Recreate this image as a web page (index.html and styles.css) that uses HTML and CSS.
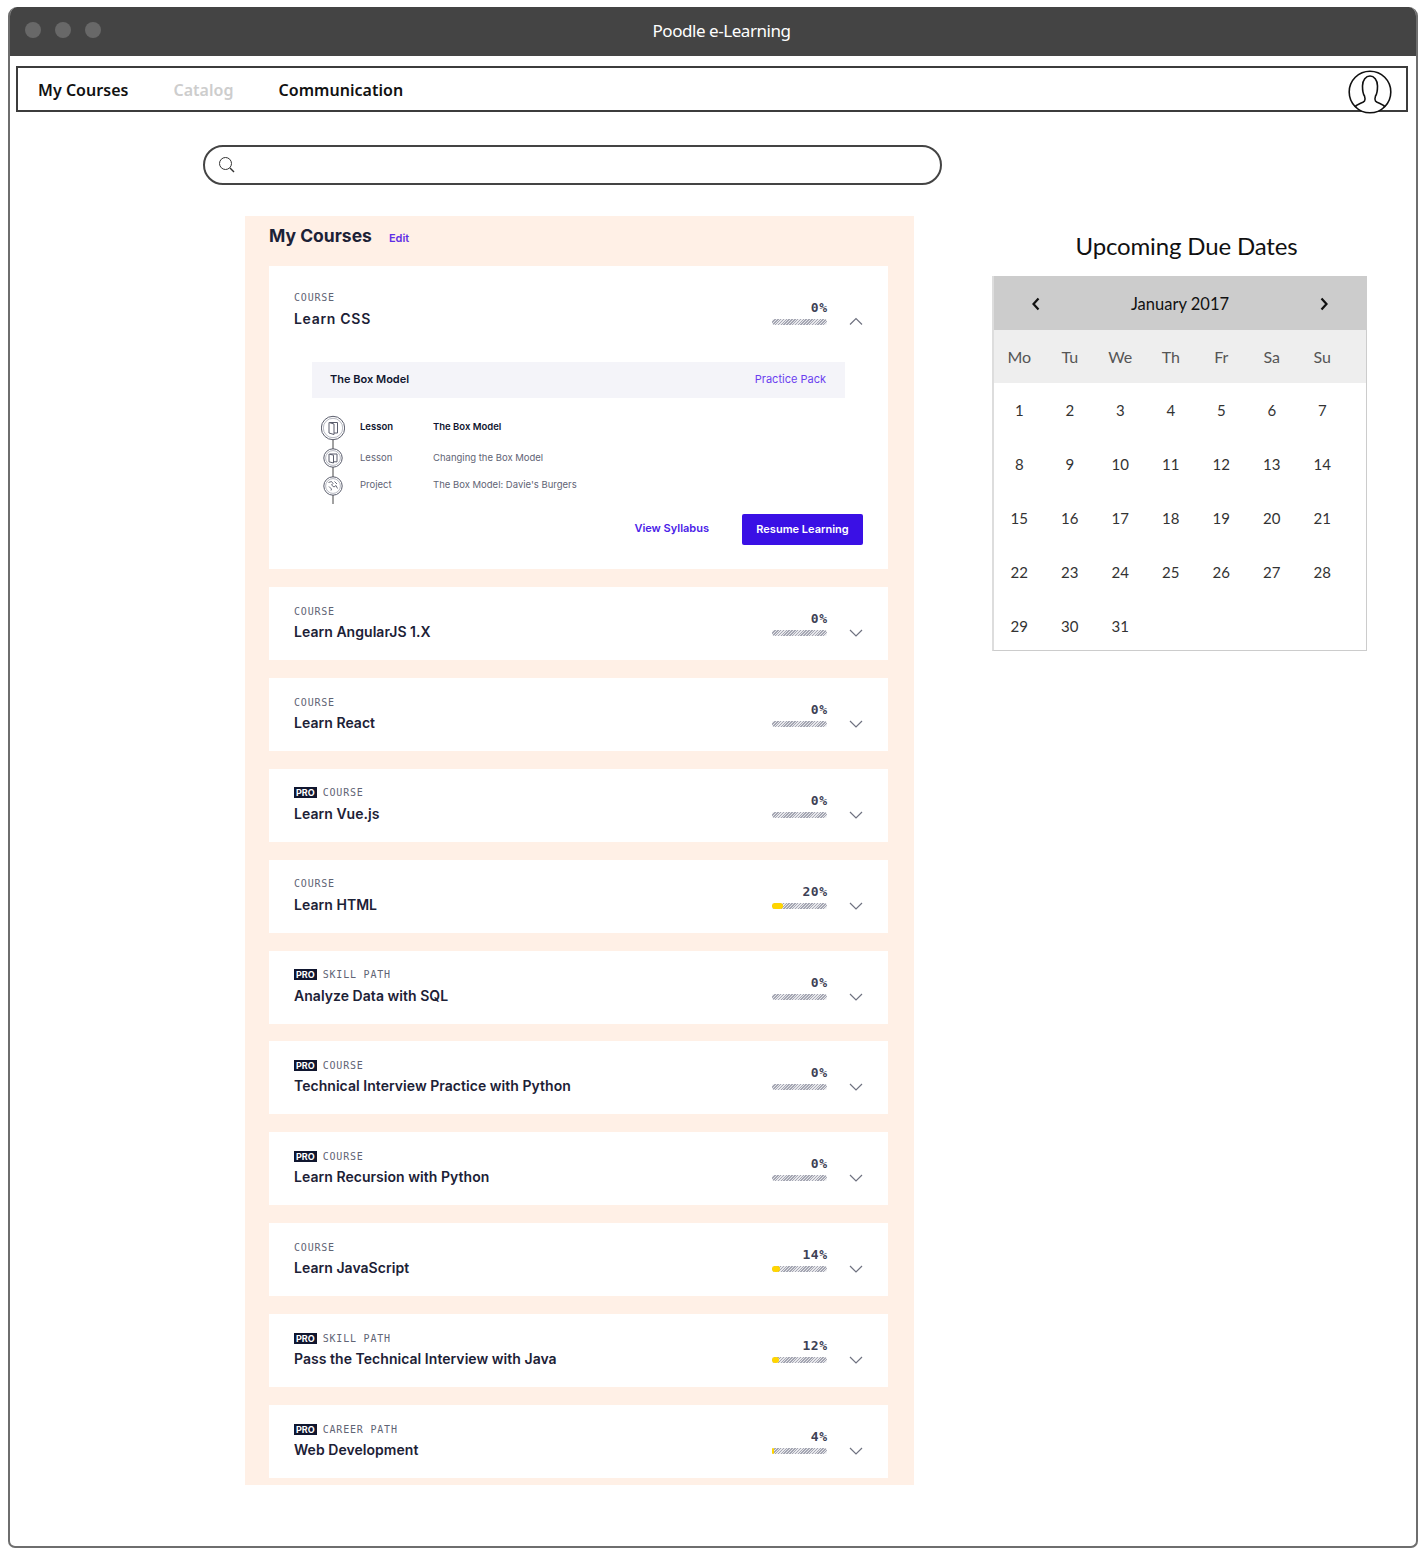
FILE: index.html
```html
<!DOCTYPE html>
<html>
<head>
  <title>Poodle e-Learning</title>
  <link rel="stylesheet" href="styles.css">
</head>
<body>
  <div class="window">
    <div class="titlebar">
      <div class="dots"><span></span><span></span><span></span></div>
      <div class="window-title">Poodle e-Learning</div>
    </div>

    <nav class="topnav">
      <a class="nav-link">My Courses</a>
      <a class="nav-link nav-disabled">Catalog</a>
      <a class="nav-link">Communication</a>
      <svg class="avatar" width="44" height="44" viewBox="0 0 44 44" fill="none" stroke="#111" stroke-width="1.6">
        <circle cx="22" cy="22" r="20.8" fill="#fff"/>
        <path d="M7 37C9 34 15 33 16.5 31C17.5 29.5 17 27.5 16.5 26C15 24 14.5 20 14.5 16C14.5 10 18 6 22 6C26 6 29.5 10 29.5 16C29.5 20 29 24 27.5 26C27 27.5 26.5 29.5 27.5 31C29 33 35 34 37 37"/>
      </svg>
    </nav>

    <div class="main">
      <div class="left-col">
        <div class="search">
          <svg width="18" height="18" viewBox="0 0 18 18" fill="none" stroke="#333" stroke-width="1">
            <circle cx="7.5" cy="7.5" r="6"/>
            <path d="M12 12L16 16" stroke-width="1.5"/>
          </svg>
        </div>

        <section class="panel">
          <div class="panel-head">
            <h2>My Courses</h2>
            <a class="edit">Edit</a>
          </div>

          <div class="card open">
            <div class="card-head">
              <div class="card-text">
                <div class="card-label"><span>COURSE</span></div>
                <div class="card-name">Learn CSS</div>
              </div>
              <div class="progress">
                <div class="percent">0%</div>
                <div class="bar"></div>
              </div>
              <svg class="chevron" width="14" height="8" viewBox="0 0 14 8"><path d="M1 7.5L7 1.5L13 7.5"/></svg>
            </div>

            <div class="band">
              <strong>The Box Model</strong>
              <a>Practice Pack</a>
            </div>

            <div class="timeline">
              <svg width="24" height="90" viewBox="0 0 24 90" fill="none" stroke="#5a5d6c">
                <path d="M12 26V35M12 53V63M12 81V90" stroke="#444"/>
                <circle cx="12" cy="14" r="11.7"/>
                <circle cx="12" cy="14" r="9.7" stroke="#a5a7b2" stroke-width=".8"/>
                <path d="M8 8.5L13 10V20.5L8 19ZM9 8.5H16.5V19H13"/>
                <circle cx="12" cy="44" r="9.2"/>
                <circle cx="12" cy="44" r="7.4" stroke="#a5a7b2" stroke-width=".8"/>
                <path d="M8 40L12.5 41.2V49L8 47.8ZM9 40H16V47.8H12.5"/>
                <circle cx="12" cy="72" r="9.2"/>
                <circle cx="12" cy="72" r="7.4" stroke="#a5a7b2" stroke-width=".8"/>
                <path d="M7.5 68.5L10.5 67.5L12 69.5L10.5 71L13 73L15 71.5L16.5 74.5M8 72.5L10.5 75L10 76.5M13.5 67.5L16 70" stroke-width=".9"/>
              </svg>
              <div class="steps">
                <div class="step step-current"><span>Lesson</span><span>The Box Model</span></div>
                <div class="step step-mid"><span>Lesson</span><span>Changing the Box Model</span></div>
                <div class="step step-last"><span>Project</span><span>The Box Model: Davie's Burgers</span></div>
              </div>
            </div>

            <div class="actions">
              <a class="syllabus">View Syllabus</a>
              <a class="resume">Resume Learning</a>
            </div>
          </div>

          <div class="card">
            <div class="card-head">
              <div class="card-text">
                <div class="card-label"><span>COURSE</span></div>
                <div class="card-name">Learn AngularJS 1.X</div>
              </div>
              <div class="progress">
                <div class="percent">0%</div>
                <div class="bar"></div>
              </div>
              <svg class="chevron" width="14" height="8" viewBox="0 0 14 8"><path d="M1 1L7 7L13 1"/></svg>
            </div>
          </div>

          <div class="card">
            <div class="card-head">
              <div class="card-text">
                <div class="card-label"><span>COURSE</span></div>
                <div class="card-name">Learn React</div>
              </div>
              <div class="progress">
                <div class="percent">0%</div>
                <div class="bar"></div>
              </div>
              <svg class="chevron" width="14" height="8" viewBox="0 0 14 8"><path d="M1 1L7 7L13 1"/></svg>
            </div>
          </div>

          <div class="card">
            <div class="card-head">
              <div class="card-text">
                <div class="card-label"><b class="pro">PRO</b><span>COURSE</span></div>
                <div class="card-name">Learn Vue.js</div>
              </div>
              <div class="progress">
                <div class="percent">0%</div>
                <div class="bar"></div>
              </div>
              <svg class="chevron" width="14" height="8" viewBox="0 0 14 8"><path d="M1 1L7 7L13 1"/></svg>
            </div>
          </div>

          <div class="card">
            <div class="card-head">
              <div class="card-text">
                <div class="card-label"><span>COURSE</span></div>
                <div class="card-name">Learn HTML</div>
              </div>
              <div class="progress">
                <div class="percent">20%</div>
                <div class="bar"><div class="bar-fill" style="width: 20%"></div></div>
              </div>
              <svg class="chevron" width="14" height="8" viewBox="0 0 14 8"><path d="M1 1L7 7L13 1"/></svg>
            </div>
          </div>

          <div class="card">
            <div class="card-head">
              <div class="card-text">
                <div class="card-label"><b class="pro">PRO</b><span>SKILL PATH</span></div>
                <div class="card-name">Analyze Data with SQL</div>
              </div>
              <div class="progress">
                <div class="percent">0%</div>
                <div class="bar"></div>
              </div>
              <svg class="chevron" width="14" height="8" viewBox="0 0 14 8"><path d="M1 1L7 7L13 1"/></svg>
            </div>
          </div>

          <div class="card">
            <div class="card-head">
              <div class="card-text">
                <div class="card-label"><b class="pro">PRO</b><span>COURSE</span></div>
                <div class="card-name">Technical Interview Practice with Python</div>
              </div>
              <div class="progress">
                <div class="percent">0%</div>
                <div class="bar"></div>
              </div>
              <svg class="chevron" width="14" height="8" viewBox="0 0 14 8"><path d="M1 1L7 7L13 1"/></svg>
            </div>
          </div>

          <div class="card">
            <div class="card-head">
              <div class="card-text">
                <div class="card-label"><b class="pro">PRO</b><span>COURSE</span></div>
                <div class="card-name">Learn Recursion with Python</div>
              </div>
              <div class="progress">
                <div class="percent">0%</div>
                <div class="bar"></div>
              </div>
              <svg class="chevron" width="14" height="8" viewBox="0 0 14 8"><path d="M1 1L7 7L13 1"/></svg>
            </div>
          </div>

          <div class="card">
            <div class="card-head">
              <div class="card-text">
                <div class="card-label"><span>COURSE</span></div>
                <div class="card-name">Learn JavaScript</div>
              </div>
              <div class="progress">
                <div class="percent">14%</div>
                <div class="bar"><div class="bar-fill" style="width: 14%"></div></div>
              </div>
              <svg class="chevron" width="14" height="8" viewBox="0 0 14 8"><path d="M1 1L7 7L13 1"/></svg>
            </div>
          </div>

          <div class="card">
            <div class="card-head">
              <div class="card-text">
                <div class="card-label"><b class="pro">PRO</b><span>SKILL PATH</span></div>
                <div class="card-name">Pass the Technical Interview with Java</div>
              </div>
              <div class="progress">
                <div class="percent">12%</div>
                <div class="bar"><div class="bar-fill" style="width: 12%"></div></div>
              </div>
              <svg class="chevron" width="14" height="8" viewBox="0 0 14 8"><path d="M1 1L7 7L13 1"/></svg>
            </div>
          </div>

          <div class="card">
            <div class="card-head">
              <div class="card-text">
                <div class="card-label"><b class="pro">PRO</b><span>CAREER PATH</span></div>
                <div class="card-name">Web Development</div>
              </div>
              <div class="progress">
                <div class="percent">4%</div>
                <div class="bar"><div class="bar-fill" style="width: 4%"></div></div>
              </div>
              <svg class="chevron" width="14" height="8" viewBox="0 0 14 8"><path d="M1 1L7 7L13 1"/></svg>
            </div>
          </div>
        </section>
      </div>

      <aside class="right-col">
        <h2 class="due-title">Upcoming Due Dates</h2>
        <div class="calendar">
          <div class="cal-head">
            <svg width="10" height="14" viewBox="0 0 10 14"><path d="M7.5 1.5L2.5 7L7.5 12.5"/></svg>
            <span>January 2017</span>
            <svg width="10" height="14" viewBox="0 0 10 14"><path d="M2.5 1.5L7.5 7L2.5 12.5"/></svg>
          </div>
          <div class="cal-week">
            <span>Mo</span><span>Tu</span><span>We</span><span>Th</span><span>Fr</span><span>Sa</span><span>Su</span>
          </div>
          <div class="cal-days">
            <span>1</span><span>2</span><span>3</span><span>4</span><span>5</span><span>6</span><span>7</span>
            <span>8</span><span>9</span><span>10</span><span>11</span><span>12</span><span>13</span><span>14</span>
            <span>15</span><span>16</span><span>17</span><span>18</span><span>19</span><span>20</span><span>21</span>
            <span>22</span><span>23</span><span>24</span><span>25</span><span>26</span><span>27</span><span>28</span>
            <span>29</span><span>30</span><span>31</span>
          </div>
        </div>
      </aside>
    </div>
  </div>
</body>
</html>
```

FILE: styles.css
```css
body {
  margin: 0;
  background: #fff;
  font-family: "Noto Sans", Arial, sans-serif;
  color: #111;
}

.window {
  box-sizing: border-box;
  height: 1541px;
  margin: 7px 9px 0 8px;
  border: 2px solid #6e6e6e;
  border-top: 0;
  border-radius: 9px 9px 7px 7px;
  overflow: hidden;
}

.titlebar {
  position: relative;
  display: flex;
  align-items: center;
  justify-content: center;
  height: 49px;
  margin: 0 -2px;
  background: #444;
}

.dots {
  position: absolute;
  left: 17px;
  top: 15px;
  display: flex;
  gap: 14px;
}

.dots span {
  width: 16px;
  height: 16px;
  border-radius: 50%;
  background: #686868;
}

.window-title {
  padding: 0 0 2px 17px;
  font-size: 17px;
  color: #fff;
  letter-spacing: -.45px;
}

.topnav {
  position: relative;
  display: flex;
  align-items: center;
  gap: 45px;
  height: 46px;
  box-sizing: border-box;
  margin: 10px 8px 0 6px;
  padding: 1px 0 0 20px;
  border: 2px solid #3c3c3c;
}

.nav-link {
  font-size: 16px;
  font-weight: 600;
  color: #111;
  letter-spacing: .03px;
}

.nav-disabled {
  color: #cdcdcd;
}

.avatar {
  position: absolute;
  right: 14px;
  top: 2px;
}

.main {
  display: flex;
  padding: 33px 0 0 193px;
}

.left-col {
  width: 739px;
}

.search {
  display: flex;
  align-items: center;
  box-sizing: border-box;
  height: 40px;
  padding-left: 13px;
  border: 2px solid #444;
  border-radius: 20px;
}

.panel {
  width: 669px;
  box-sizing: border-box;
  margin: 31px 0 0 42px;
  padding: 0 26px 7px 24px;
  background: #fff0e6;
  font-family: Inter, Arial, sans-serif;
  color: #10162f;
}

.panel-head {
  display: flex;
  align-items: center;
  gap: 17px;
  height: 50px;
  padding-bottom: 12px;
  box-sizing: border-box;
}

.panel-head h2 {
  margin: 0;
  font-size: 17.5px;
  font-weight: 700;
  color: #1c2136;
}

.edit {
  font-size: 11px;
  font-weight: 600;
  color: #5f2ee5;
  margin-top: 5px;
}

.card {
  margin-bottom: 17.91px;
  padding: 17px 25px 18px;
  background: #fff;
}

.card:last-child {
  margin-bottom: 0;
}

.card.open {
  margin-bottom: 18px;
  padding-top: 24px;
  padding-bottom: 24px;
}

.card-head {
  display: flex;
  align-items: flex-start;
}

.card-text {
  flex: 1;
}

.card-label {
  display: flex;
  align-items: center;
  gap: 6px;
  height: 14.4px;
  font-family: "DejaVu Sans Mono", monospace;
  font-size: 10px;
  color: #5f6475;
  letter-spacing: .8px;
}

.pro {
  padding: 0 2px;
  background: #10162f;
  color: #fff;
  font-family: Inter, Arial, sans-serif;
  font-size: 9px;
  line-height: 11px;
  letter-spacing: 0;
}

.card-name {
  margin-top: 3.6px;
  font-size: 14px;
  line-height: 20px;
  font-weight: 600;
  color: #1c2136;
  letter-spacing: .04px;
}

.open .card-name {
  padding-top: 1px;
  letter-spacing: .7px;
}

.progress {
  width: 55px;
  margin-top: 8px;
}

.open .progress {
  margin-top: 11px;
}

.percent {
  height: 14px;
  margin-right: -.5px;
  font-family: "DejaVu Sans Mono", monospace;
  font-size: 13px;
  line-height: 14px;
  font-weight: 700;
  text-align: right;
  letter-spacing: .5px;
  color: #3d4155;
}

.bar {
  height: 6px;
  margin-top: 4px;
  border-radius: 3px;
  background: repeating-linear-gradient(135deg, #a4a6b2 0, #a4a6b2 1px, #e8e8ec 1px, #e8e8ec 2px);
}

.bar-fill {
  height: 6px;
  border-radius: 3px;
  background: #ffd500;
}

.chevron {
  margin: 25px 0 0 22px;
  fill: none;
  stroke: #6f7280;
  stroke-width: 1.2;
}

.open .chevron {
  margin-top: 27px;
}

.band {
  display: flex;
  align-items: center;
  justify-content: space-between;
  box-sizing: border-box;
  height: 36px;
  margin: 33px 18px 0 18px;
  padding: 0 19px 2px 18px;
  background: #f4f4f9;
  font-size: 11px;
}

.band strong {
  font-weight: 600;
}

.band a {
  color: #6b3ff0;
}

.timeline {
  display: flex;
  gap: 15px;
  margin: 16px 0 0 27px;
}

.steps {
  margin-top: -1px;
  font-size: 9.5px;
  color: #5f6475;
}

.step {
  display: flex;
  align-items: center;
}

.step span:first-child {
  width: 73px;
}

.step-current {
  height: 28px;
  font-weight: 600;
  color: #10162f;
}

.step-mid {
  height: 32px;
  margin-top: 1px;
}

.step-last {
  height: 22px;
}

.actions {
  display: flex;
  align-items: center;
  justify-content: flex-end;
  gap: 33px;
  margin-top: 10px;
}

.syllabus {
  padding-bottom: 2px;
  font-size: 11px;
  font-weight: 600;
  color: #4a22e8;
}

.resume {
  width: 121px;
  height: 31px;
  line-height: 30px;
  text-align: center;
  border-radius: 2px;
  background: #3a10e5;
  color: #fff;
  font-size: 11px;
  font-weight: 600;
}

.right-col {
  width: 375px;
  margin: 86px 0 0 50px;
  font-family: Lato, "Noto Sans", sans-serif;
}

.due-title {
  margin: 0 0 13px;
  padding-left: 14px;
  font-size: 24px;
  line-height: 30px;
  height: 32px;
  font-weight: 400;
  text-align: center;
  letter-spacing: -.15px;
}

.calendar {
  box-sizing: border-box;
  height: 375px;
  border: 1px solid #ccc;
  border-top: 0;
  border-left: 2px solid #ddd;
  font-size: 15px;
}

.cal-head {
  display: flex;
  align-items: center;
  justify-content: space-between;
  height: 54px;
  padding: 1px 37px 0 37px;
  box-sizing: border-box;
  background: #ccc;
  font-size: 16.5px;
}

.cal-head svg {
  fill: none;
  stroke: #111;
  stroke-width: 2.2;
}

.cal-week,
.cal-days {
  display: grid;
  grid-template-columns: repeat(7, 50.5px);
  text-align: center;
}

.cal-week {
  height: 53px;
  line-height: 54px;
  background: #eee;
  color: #555;
  font-size: 16px;
}

.cal-days {
  grid-auto-rows: 54px;
  line-height: 54px;
  color: #333;
}
```
